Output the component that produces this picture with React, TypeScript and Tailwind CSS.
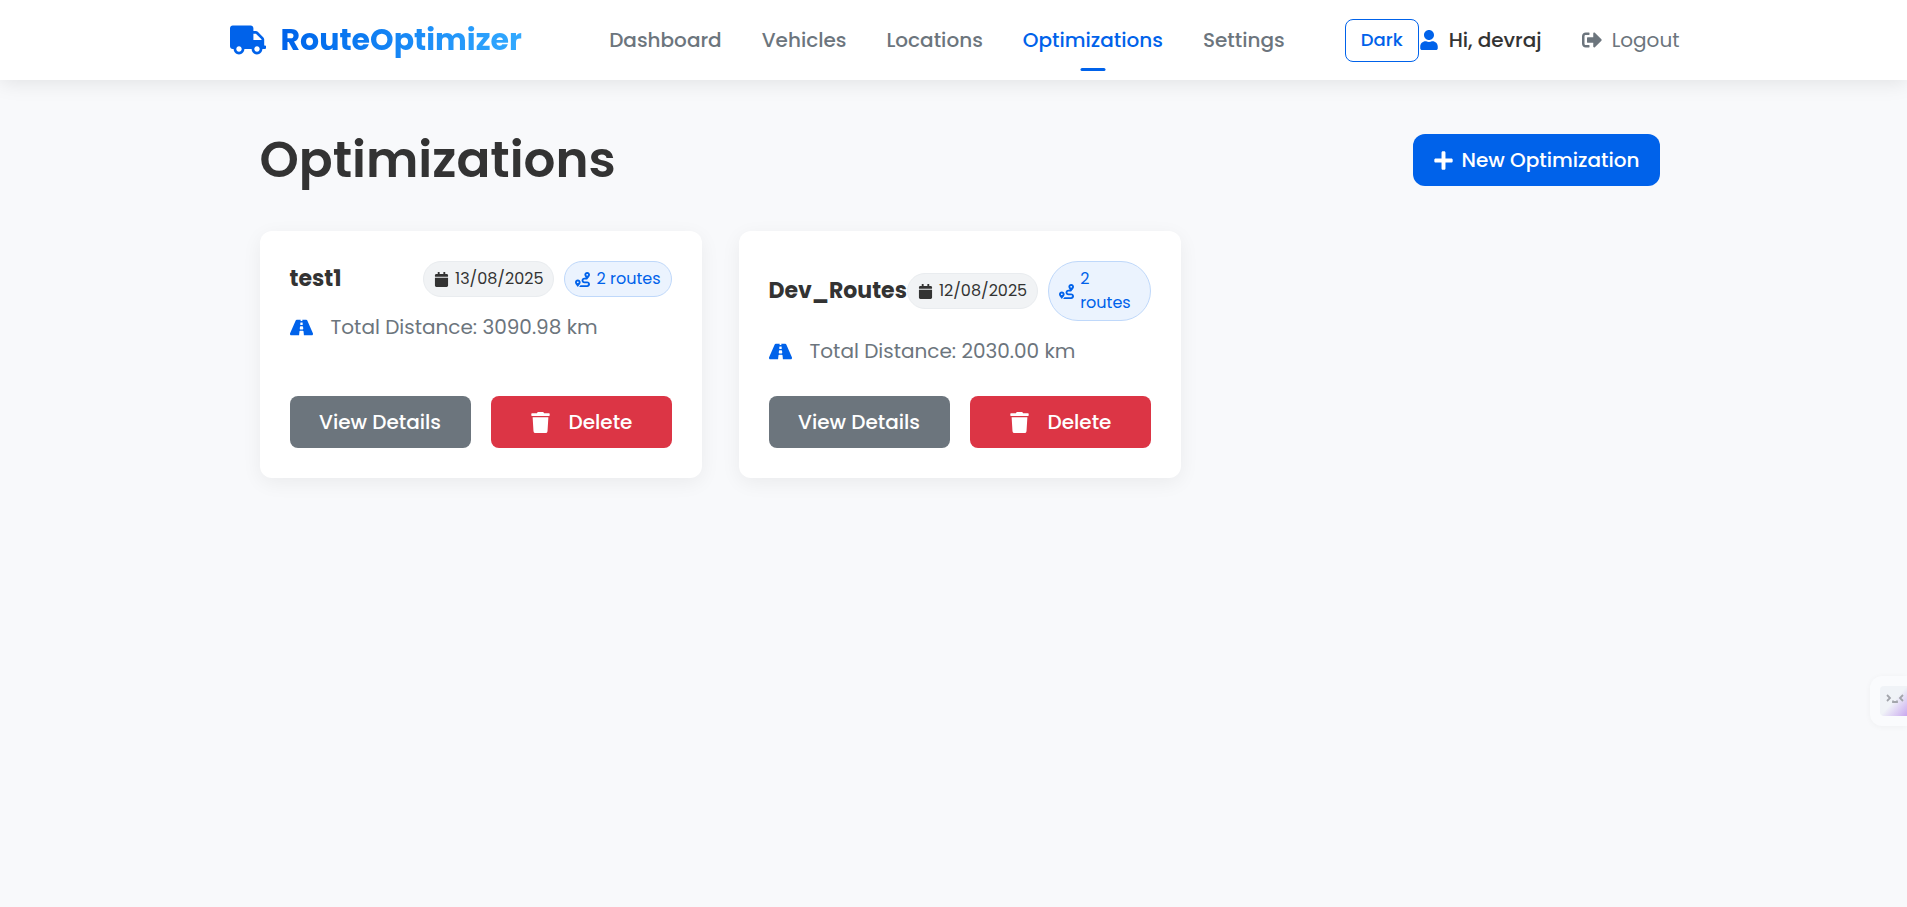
import { FaTruck, FaUser, FaSignOutAlt, FaPlus, FaCalendar, FaRoute, FaRoad, FaTrash } from "react-icons/fa";

type Optimization = { name: string; date: string; routes: number; distance: string };

const navItems = ["Dashboard", "Vehicles", "Locations", "Optimizations", "Settings"];

const optimizations: Optimization[] = [
  { name: "test1", date: "13/08/2025", routes: 2, distance: "3090.98" },
  { name: "Dev_Routes", date: "12/08/2025", routes: 2, distance: "2030.00" },
];

function Header() {
  return (
    <header className="relative h-20 bg-white shadow-[0_2px_20px_rgba(0,0,0,0.1)]">
      <div className="mx-auto flex h-full max-w-[1500px] items-center justify-between pr-6 pl-[26px]">
        <a href="#" className="flex items-center gap-[15px] text-[30px] font-bold">
          <FaTruck className="size-9 text-[#0062ea]" />
          <span className="bg-linear-to-r from-[#0062ea] to-[#33aaff] bg-clip-text text-transparent">RouteOptimizer</span>
        </a>
        <div className="flex items-center">
          <nav className="mr-15 flex items-center gap-10">
            {navItems.map((item) => (
              <a
                key={item}
                href="#"
                className={
                  item === "Optimizations"
                    ? "relative py-2.5 font-medium text-[#0062ea] after:absolute after:-bottom-[7px] after:left-1/2 after:h-[3px] after:w-[25px] after:-translate-x-1/2 after:rounded-sm after:bg-[#0062ea]"
                    : "py-2.5 font-medium text-[#6c757d]"
                }
              >
                {item}
              </a>
            ))}
          </nav>
          <button className="h-[43px] rounded-lg border border-[#0062ea] px-[15px] text-lg font-medium text-[#0062ea]">Dark</button>
          <span className="flex items-center gap-2.5 font-medium text-[#333]">
            <FaUser className="size-5 text-[#0062ea]" />
            Hi, devraj
          </span>
          <a href="#" className="ml-10 flex items-center gap-2.5 text-[#6c757d]">
            <FaSignOutAlt className="size-5" />
            Logout
          </a>
        </div>
      </div>
    </header>
  );
}

function OptimizationCard({ item }: { item: Optimization }) {
  return (
    <article className="flex min-h-[247px] flex-col rounded-xl bg-white p-[30px] shadow-[0_5px_20px_rgba(0,0,0,0.06)]">
      <div className="flex items-center justify-between">
        <h2 className="text-[22px] font-bold">{item.name}</h2>
        <div className="flex items-center gap-2.5 text-base">
          <span className="flex items-center gap-1.5 rounded-full border border-[#e9ecef] bg-[#f1f3f5] px-2.5 py-[5px]">
            <FaCalendar className="size-[15px]" />
            {item.date}
          </span>
          <span className="flex items-center gap-1.5 rounded-full border border-[#bfd8fa] bg-[#ebf3fe] px-2.5 py-[5px] text-[#0062ea]">
            <FaRoute className="size-[15px] shrink-0" />
            {item.routes} routes
          </span>
        </div>
      </div>
      <p className="mt-3.5 flex items-center gap-[18px] leading-8 text-[#6c757d]">
        <FaRoad className="size-[23px] text-[#0062ea]" />
        Total Distance: {item.distance} km
      </p>
      <div className="mt-auto grid grid-cols-2 gap-5 font-medium text-white">
        <button className="h-[52px] rounded-lg bg-[#6c757d]">View Details</button>
        <button className="flex h-[52px] items-center justify-center gap-[18px] rounded-lg bg-[#dc3545]">
          <FaTrash className="size-[21px]" />
          Delete
        </button>
      </div>
    </article>
  );
}

function AssistantTab() {
  return (
    <button
      aria-label="Open assistant"
      className="absolute top-[676px] right-0 h-[50px] w-[37px] rounded-l-xl bg-[#fafbfd] py-2.5 pl-2.5 shadow-[0_1px_6px_rgba(0,0,0,0.04)]"
    >
      <span className="flex h-[30px] items-start rounded-l bg-linear-to-br from-[#f0f3f7] from-50% to-[#c9a8ee] pt-2 pl-1.5">
        <svg viewBox="0 0 18 10" className="h-2.5 w-[18px] shrink-0" fill="none" stroke="#a3a5ab" strokeWidth="1.8">
          <path d="M1 1l3 3-3 3M17 1l-3 3 3 3M7 6.5v1.5h4V6.5" />
        </svg>
      </span>
    </button>
  );
}

export default function App() {
  return (
    <div className="relative min-h-screen overflow-hidden bg-[#f8f9fb] font-[Poppins,Inter,sans-serif] text-xl text-[#333]">
      <Header />
      <main className="mx-auto max-w-[1500px] pt-[45px] pr-11 pl-14">
        <div className="flex items-center justify-between">
          <h1 className="text-[50px] leading-[70px] font-semibold">Optimizations</h1>
          <button className="flex h-[52px] items-center gap-2 rounded-xl bg-[#0062ea] px-5 font-medium text-white">
            <FaPlus className="size-[21px]" />
            New Optimization
          </button>
        </div>
        <section className="mt-9 grid grid-cols-3 gap-[37px]">
          {optimizations.map((item) => (
            <OptimizationCard key={item.name} item={item} />
          ))}
        </section>
      </main>
      <AssistantTab />
    </div>
  );
}
